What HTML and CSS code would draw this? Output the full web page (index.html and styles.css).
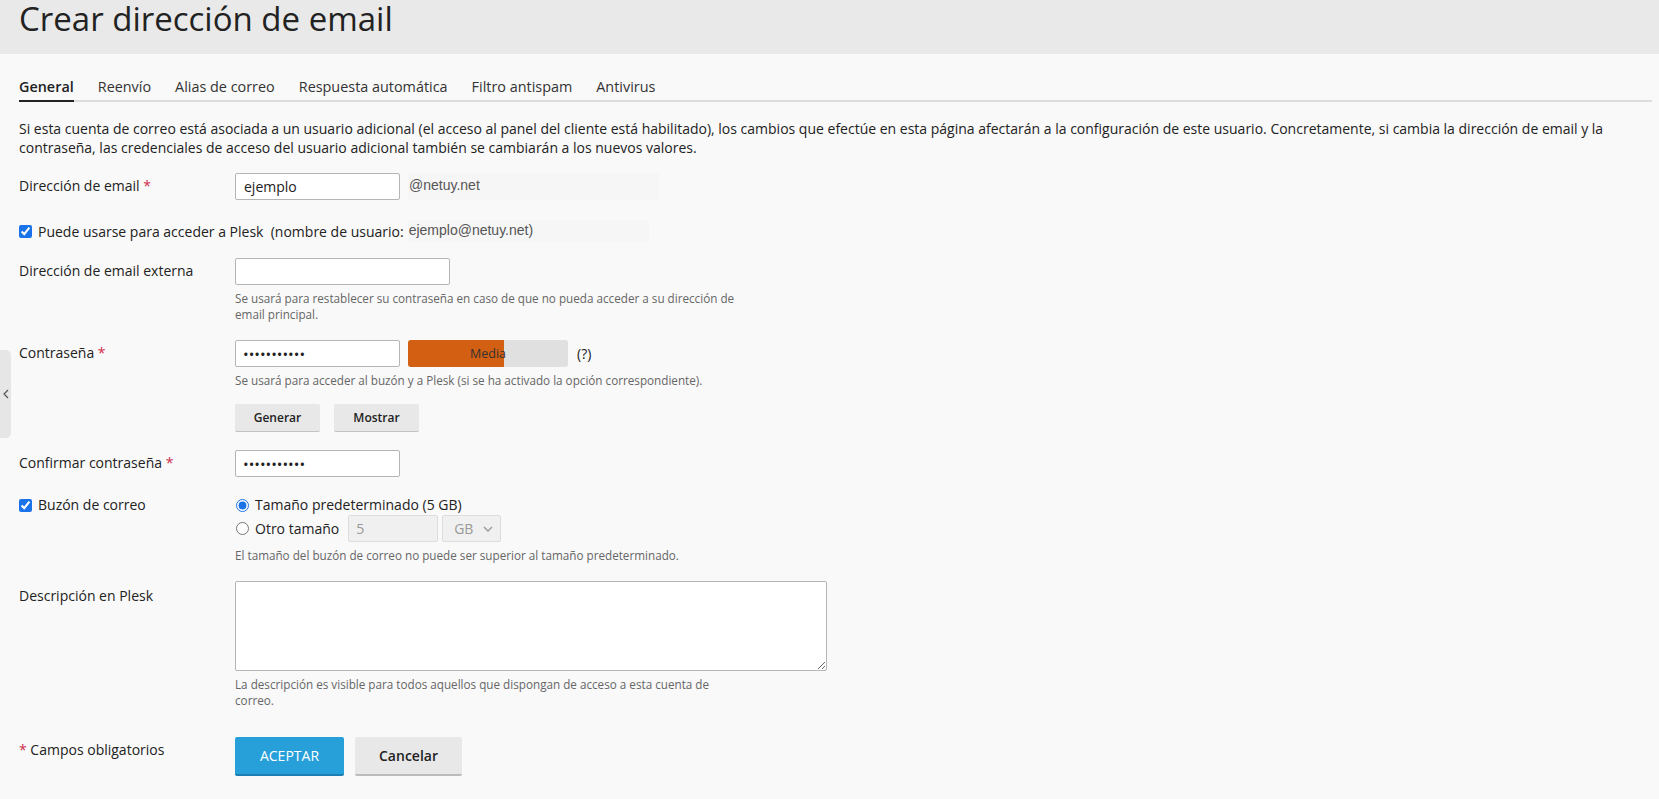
FILE: index.html
```html
<!DOCTYPE html>
<html lang="es">
<head>
    <meta charset="UTF-8">
    <meta name="viewport" content="width=device-width, initial-scale=1.0">
    <title>Crear dirección de email</title>
    <link rel="stylesheet" href="styles.css">
</head>
<body>
    <div class="page-header">
        <h1>Crear dirección de email</h1>
    </div>

    <div class="side-handle">
        <svg width="8" height="10" viewBox="0 0 8 10"><path d="M6 1 L2 5 L6 9" fill="none" stroke="#555" stroke-width="1.2"/></svg>
    </div>

    <div class="content">
        <ul class="tabs">
            <li class="active">General</li>
            <li>Reenvío</li>
            <li>Alias de correo</li>
            <li>Respuesta automática</li>
            <li>Filtro antispam</li>
            <li>Antivirus</li>
        </ul>

        <p class="intro">Si esta cuenta de correo está asociada a un usuario adicional (el acceso al panel del cliente está habilitado), los cambios que efectúe en esta página afectarán a la configuración de este usuario. Concretamente, si cambia la dirección de email y la contraseña, las credenciales de acceso del usuario adicional también se cambiarán a los nuevos valores.</p>

        <div class="form">
            <div class="row row-email">
                <label class="lbl">Dirección de email <span class="req">*</span></label>
                <div class="field inline">
                    <input class="txt w-short" type="text" value="ejemplo">
                    <span class="domain">@netuy.net</span>
                </div>
            </div>

            <div class="row row-login">
                <label class="check"><input type="checkbox" checked> Puede usarse para acceder a Plesk&nbsp; (nombre de usuario:</label>
                <span class="domain login">ejemplo@netuy.net)</span>
            </div>

            <div class="row">
                <label class="lbl">Dirección de email externa</label>
                <div class="field">
                    <input class="txt w-mid" type="text">
                    <div class="hint">Se usará para restablecer su contraseña en caso de que no pueda acceder a su dirección de email principal.</div>
                </div>
            </div>

            <div class="row">
                <label class="lbl">Contraseña <span class="req">*</span></label>
                <div class="field">
                    <div class="inline">
                        <input class="txt w-short pwd" type="password" value="abcdefghijk">
                        <div class="strength"><div class="strength-fill"></div><span>Media</span></div>
                        <span class="qmark">(?)</span>
                    </div>
                    <div class="hint">Se usará para acceder al buzón y a Plesk (si se ha activado la opción correspondiente).</div>
                    <div class="btn-row">
                        <button class="btn-small">Generar</button>
                        <button class="btn-small">Mostrar</button>
                    </div>
                </div>
            </div>

            <div class="row">
                <label class="lbl">Confirmar contraseña <span class="req">*</span></label>
                <div class="field">
                    <input class="txt w-short pwd" type="password" value="abcdefghijk">
                </div>
            </div>

            <div class="row row-mailbox">
                <label class="lbl check"><input type="checkbox" checked> Buzón de correo</label>
                <div class="field">
                    <label class="radio"><input type="radio" name="size" checked> Tamaño predeterminado (5 GB)</label>
                    <div class="radio inline">
                        <input type="radio" name="size"> <span>Otro tamaño</span>
                        <input class="txt small-num" type="text" value="5" disabled>
                        <div class="unit">GB <svg width="10" height="6" viewBox="0 0 10 6"><path d="M1 1 L5 5 L9 1" fill="none" stroke="#999" stroke-width="1.4"/></svg></div>
                    </div>
                    <div class="hint">El tamaño del buzón de correo no puede ser superior al tamaño predeterminado.</div>
                </div>
            </div>

            <div class="row">
                <label class="lbl lbl-top">Descripción en Plesk</label>
                <div class="field">
                    <textarea class="desc"></textarea>
                    <div class="hint">La descripción es visible para todos aquellos que dispongan de acceso a esta cuenta de correo.</div>
                </div>
            </div>

            <div class="row row-actions">
                <div class="lbl"><span class="req">*</span> Campos obligatorios</div>
                <div class="field inline">
                    <button class="btn-primary">ACEPTAR</button>
                    <button class="btn-cancel">Cancelar</button>
                </div>
            </div>
        </div>
    </div>
</body>
</html>
```

FILE: styles.css
```css
body {
    margin: 0;
    background: #f9f9f9;
    font-family: "Open Sans", "Noto Sans", sans-serif;
    font-size: 14px;
    color: #222;
}
.page-header {
    background: #e9e9e9;
    height: 54px;
    padding-left: 19px;
    overflow: hidden;
}
.page-header h1 {
    margin: 0;
    margin-top: -9px;
    font-size: 33px;
    font-weight: 500;
    line-height: 56px;
    color: #222;
}
.side-handle {
    position: absolute;
    left: 0;
    top: 350px;
    width: 11px;
    height: 88px;
    background: #e6e6e6;
    border-radius: 0 5px 5px 0;
    display: flex;
    align-items: center;
    justify-content: center;
}
.content {
    padding: 23px 7px 0 19px;
}
.tabs {
    list-style: none;
    margin: 0;
    padding: 0;
    display: flex;
    gap: 24px;
    border-bottom: 2px solid #ddd;
}
.tabs li {
    font-size: 14.4px;
    color: #333;
    padding-bottom: 4px;
    margin-bottom: -2px;
    border-bottom: 2px solid transparent;
}
.tabs li.active {
    font-weight: 600;
    color: #222;
    border-bottom-color: #222;
}
.intro {
    margin: 17px 0 0 0;
    line-height: 19px;
    color: #222;
}
.form {
    margin-top: 16px;
}
.row {
    display: flex;
    margin-bottom: 18px;
}
.lbl {
    width: 216px;
    flex-shrink: 0;
    line-height: 26px;
    color: #222;
}
.lbl-top {
    line-height: 30px;
}
.req {
    color: #d02c4c;
}
.field {
    display: flex;
    flex-direction: column;
    align-items: flex-start;
}
.inline {
    display: flex;
    flex-direction: row;
    align-items: center;
}
.txt {
    box-sizing: border-box;
    height: 27px;
    border: 1px solid #b5b5b5;
    border-radius: 2px;
    background: #fff;
    font-family: "Open Sans", sans-serif;
    font-size: 14px;
    color: #222;
    padding: 0 8px;
}
.w-short {
    width: 165px;
}
.w-mid {
    width: 215px;
}
.pwd {
    font-size: 15px;
    padding-left: 7px;
}
.domain {
    font-family: "Liberation Sans", Arial, sans-serif;
    font-size: 14px;
    color: #555;
    background: #f6f6f6;
    width: 250px;
    height: 27px;
    line-height: 25px;
    padding-left: 1px;
    margin-left: 8px;
}
.row-email {
    margin-bottom: 21px;
}
.row-login {
    align-items: center;
    height: 20px;
    margin-bottom: 17px;
}
.row-login .domain.login {
    margin-left: 4px;
    width: 240px;
    height: 22px;
    line-height: 20px;
}
.check {
    display: flex;
    align-items: center;
}
.check input {
    width: 13px;
    height: 13px;
    margin: 0 6px 0 0;
    accent-color: #1a73e8;
}
.hint {
    width: 510px;
    margin-top: 5px;
    font-size: 11.7px;
    line-height: 16px;
    color: #666;
}
.strength {
    position: relative;
    width: 160px;
    height: 27px;
    margin-left: 8px;
    background: #e0e0e0;
    border-radius: 3px;
    overflow: hidden;
    display: flex;
    align-items: center;
    justify-content: center;
}
.strength-fill {
    position: absolute;
    left: 0;
    top: 0;
    bottom: 0;
    width: 60%;
    background: #d25f12;
}
.strength span {
    position: relative;
    font-size: 12.5px;
    color: #333;
}
.qmark {
    margin-left: 9px;
    font-size: 14px;
}
.btn-row {
    display: flex;
    gap: 14px;
    margin-top: 16px;
}
.btn-small {
    box-sizing: border-box;
    width: 85px;
    height: 28px;
    border: none;
    border-bottom: 1px solid #c2c2c2;
    border-radius: 2px;
    background: #e8e8e8;
    font-family: "Open Sans", sans-serif;
    font-size: 12px;
    font-weight: 600;
    color: #222;
}
.row-mailbox .lbl {
    line-height: 20px;
    height: 20px;
}
.row-mailbox {
    margin-top: 2px;
}
.radio {
    display: flex;
    align-items: center;
    font-size: 14px;
    line-height: 20px;
}
.radio input[type="radio"] {
    width: 13px;
    height: 13px;
    margin: 0 6px 0 1px;
    accent-color: #1a73e8;
}
.small-num {
    width: 90px;
    margin-left: 9px;
    background: #f0f0f0;
    border-color: #ddd;
    color: #999;
    padding-left: 7px;
}
.unit {
    box-sizing: border-box;
    width: 59px;
    height: 27px;
    margin-left: 4px;
    background: #f0f0f0;
    border: 1px solid #ddd;
    border-radius: 2px;
    display: flex;
    align-items: center;
    justify-content: space-between;
    padding: 0 7px 0 11px;
    color: #999;
    font-size: 14px;
}
.desc {
    box-sizing: border-box;
    width: 592px;
    height: 90px;
    border: 1px solid #b5b5b5;
    border-radius: 2px;
    background: #fff;
    resize: vertical;
}
.row-actions {
    margin-top: 29px;
}
.btn-primary {
    width: 109px;
    height: 39px;
    border: none;
    border-bottom: 2px solid #1c7fb3;
    border-radius: 2px;
    background: #27a0da;
    color: #fff;
    font-family: "Open Sans", sans-serif;
    font-size: 14px;
}
.btn-cancel {
    width: 107px;
    height: 39px;
    margin-left: 11px;
    border: none;
    border-bottom: 2px solid #bbb;
    border-radius: 2px;
    background: #e8e8e8;
    color: #222;
    font-family: "Open Sans", sans-serif;
    font-size: 14px;
    font-weight: 600;
}
```
